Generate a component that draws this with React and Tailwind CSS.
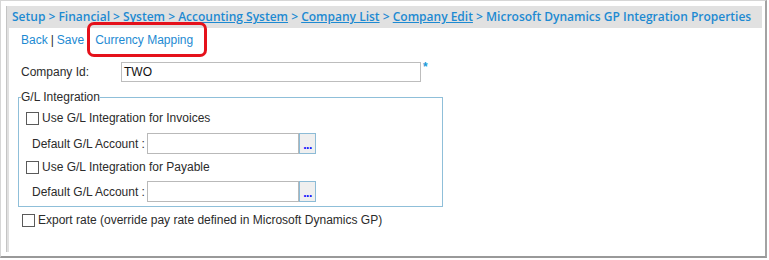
import React from "react";

const blue = "text-[#1d8ad2]";

const Check = () => (
  <span className="inline-block w-[13px] h-[13px] border border-[#5a5a5a] bg-white shrink-0" />
);

const AccountRow = ({ className }) => (
  <div className={`flex items-center h-[21px] pl-[13px] ${className}`}>
    <span className="w-[115px] leading-[14px]">Default G/L Account :</span>
    <span className="w-[152px] h-[21px] border border-[#b9b9b9] bg-white" />
    <button className="w-[17px] h-[21px] border border-[#8cbbd6] bg-[#efefef] flex items-center justify-center">
      <span className="text-[#1010ff] font-bold text-[12px] leading-none tracking-[-0.5px] mt-[2px]">...</span>
    </button>
  </div>
);

const App = () => {
  return (
    <div
      className="relative w-[769px] h-[260px] bg-white overflow-hidden text-[12px] text-[#2b2b2b]"
      style={{ fontFamily: '"Liberation Sans", Arial, sans-serif' }}
    >
      {/* window frame */}
      <div className="w-[767px] h-[258px] flex border-l border-t border-[#d6d6d6] border-r-2 border-b-2 border-r-[#a3a3a3] border-b-[#999999] pl-[5px] pt-[5px]">
        {/* left rail */}
        <div className="w-[3px] h-[246px] border-l border-[#c4c4c4] bg-[#e0e0e0]" />

        <div className="flex-1 pr-[3px] flex flex-col">
          {/* breadcrumb */}
          <div
            className={`h-[22px] bg-[#e1e1e1] pl-[3px] flex items-center font-semibold text-[12px] whitespace-pre ${blue}`}
            style={{ fontFamily: '"Open Sans", sans-serif' }}
          >
            <span>Setup &gt; Financial &gt; System &gt; </span>
            <span className="underline">Accounting System</span>
            <span> &gt; </span>
            <span className="underline">Company List</span>
            <span> &gt; </span>
            <span className="underline">Company Edit</span>
            <span> &gt; Microsoft Dynamics GP Integration Properties</span>
          </div>

          {/* actions */}
          <div className="mt-[5px] h-[15px] leading-[15px] pl-[12px] flex">
            <span className={blue}>Back</span>
            <span className="mx-[3px]">|</span>
            <span className={blue}>Save</span>
            <span className={`ml-[11px] ${blue}`}>Currency Mapping</span>
          </div>

          {/* company id */}
          <div className="mt-[14px] pl-[12px] flex items-start">
            <span className="w-[100px] h-[20px] leading-[20px]">Company Id:</span>
            <span className="w-[300px] h-[20px] border border-[#bdbdbd] leading-[18px] pl-[2px] text-[#111]">TWO</span>
            <span className="ml-[2px] text-[#1b9ad8] text-[12px] leading-[10px] font-bold">*</span>
          </div>

          {/* G/L integration */}
          <fieldset className="mt-[8px] ml-[9px] w-[425px] border border-[#8fbfd9] pb-[4px] flex flex-col">
            <legend className="ml-[2px] leading-[14px] text-[12px]">G/L Integration</legend>
            <div className="mt-[7px] h-[14px] pl-[7px] flex items-center gap-[3px]">
              <Check />
              <span className="leading-[14px]">Use G/L Integration for Invoices</span>
            </div>
            <AccountRow className="mt-[8px]" />
            <div className="mt-[6px] h-[14px] pl-[7px] flex items-center gap-[3px]">
              <Check />
              <span className="leading-[14px]">Use G/L Integration for Payable</span>
            </div>
            <AccountRow className="mt-[7px]" />
          </fieldset>

          {/* export rate */}
          <div className="mt-[6px] h-[14px] pl-[13px] flex items-center gap-[3px]">
            <Check />
            <span className="leading-[14px]">Export rate (override pay rate defined in Microsoft Dynamics GP)</span>
          </div>
        </div>
      </div>

      {/* annotation highlight */}
      <div className="absolute left-[87px] top-[22px] w-[120px] h-[35px] border-[3px] border-[#e5111b] rounded-[7px]" />
    </div>
  );
};

export default App;
